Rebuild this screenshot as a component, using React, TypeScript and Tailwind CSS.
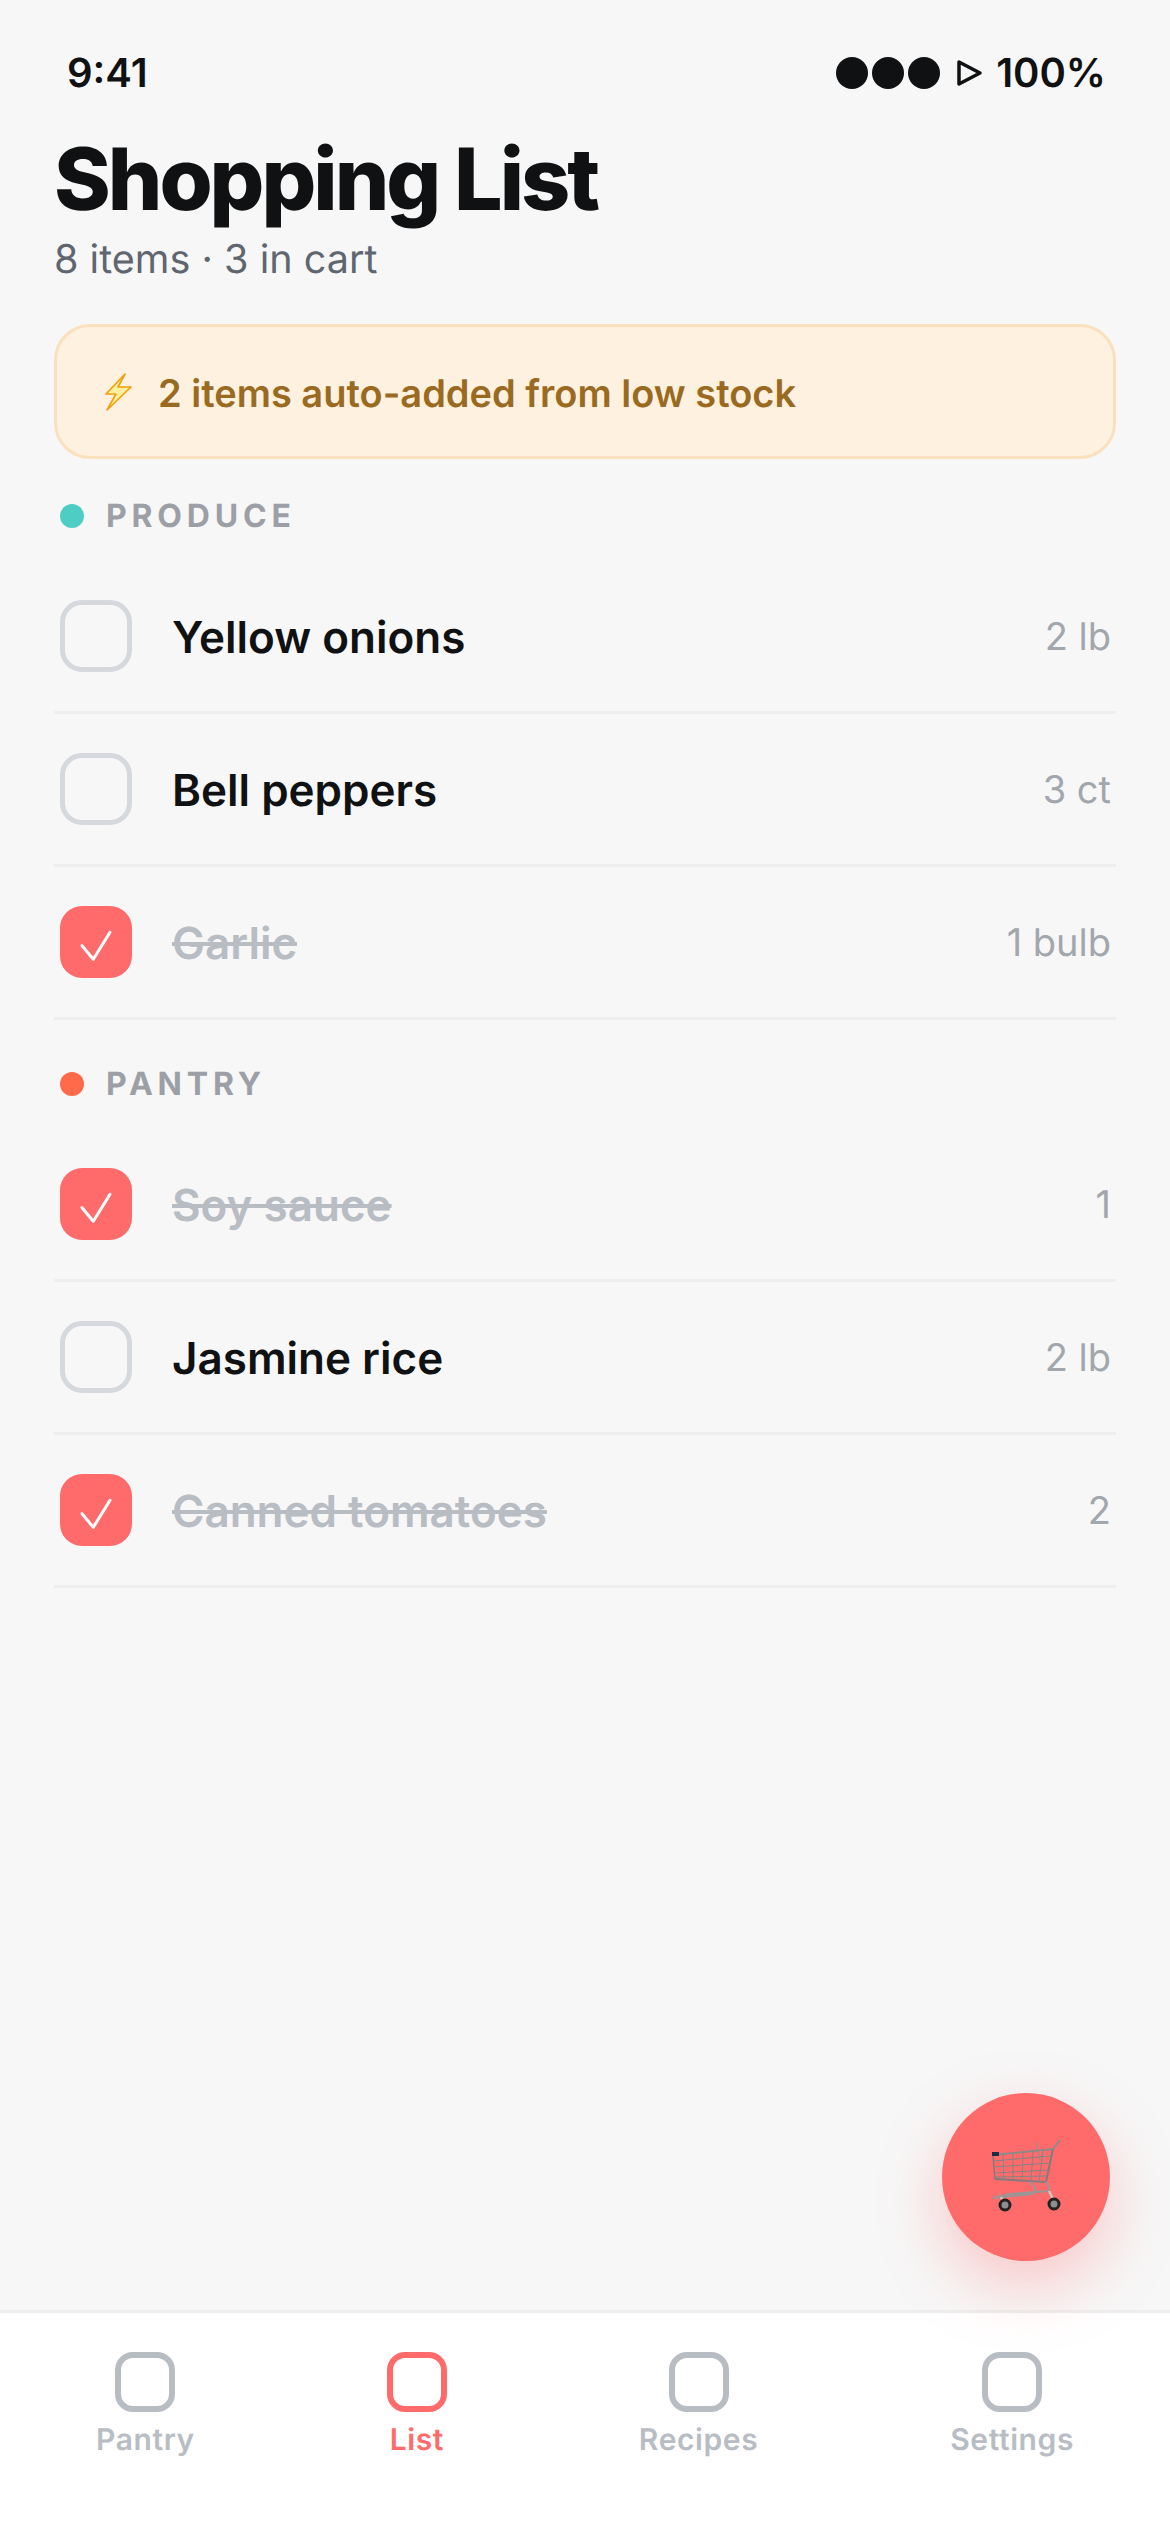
const items = {
  produce: [
    { name: "Yellow onions", qty: "2 lb", done: false },
    { name: "Bell peppers", qty: "3 ct", done: false },
    { name: "Garlic", qty: "1 bulb", done: true },
  ],
  pantry: [
    { name: "Soy sauce", qty: "1", done: true },
    { name: "Jasmine rice", qty: "2 lb", done: false },
    { name: "Canned tomatoes", qty: "2", done: true },
  ],
};

type Item = { name: string; qty: string; done: boolean };

const Row = ({ item }: { item: Item }) => (
  <div className="flex h-[153px] items-center border-b-[3px] border-[#EEEEEE] pl-[6px] pr-[5px]">
    {item.done ? (
      <div className="h-[72px] w-[72px] shrink-0 rounded-[22px] bg-[#FF6B6B]">
        <svg width="72" height="72" viewBox="0 0 72 72" fill="none">
          <path d="M22 39.7 L33.3 53.3 L50 26.3" stroke="#fff" strokeWidth="3" strokeLinecap="round" strokeLinejoin="round" />
        </svg>
      </div>
    ) : (
      <div className="h-[72px] w-[72px] shrink-0 rounded-[22px] border-[5px] border-[#D5D8DD]" />
    )}
    <span
      className={
        item.done
          ? "ml-10 flex-1 pt-[2px] text-[44px] font-semibold text-[#B8BDC4] line-through"
          : "ml-10 flex-1 pt-[2px] text-[44px] font-semibold text-[#0F1113]"
      }
    >
      {item.name}
    </span>
    <span className="pt-[2px] text-[38px] text-[#A2A6AD]">{item.qty}</span>
  </div>
);

const SectionLabel = ({ label, dot }: { label: string; dot: string }) => (
  <div className="flex items-center pl-[6px]">
    <span className={`h-6 w-6 rounded-full ${dot}`} />
    <span className="ml-[22px] text-[32px] leading-[40px] font-bold tracking-[0.15em] text-[#9CA0A6]">{label}</span>
  </div>
);

const Tab = ({ label, active }: { label: string; active?: boolean }) => (
  <div className="flex flex-col items-center gap-[9px]">
    <div
      className={
        active
          ? "h-[60px] w-[60px] rounded-[18px] border-[6px] border-[#FF6B6B]"
          : "h-[60px] w-[60px] rounded-[18px] border-[6px] border-[#B8BDC4]"
      }
    />
    <span
      className={
        active
          ? "text-[30px] leading-[38px] font-semibold tracking-[0.02em] text-[#FF6B6B]"
          : "text-[30px] leading-[38px] font-semibold tracking-[0.02em] text-[#B8BDC4]"
      }
    >
      {label}
    </span>
  </div>
);

const Bolt = () => (
  <svg width="28" height="38" viewBox="0 0 28 38" className="shrink-0">
    <path
      d="M21 1 L2 21 L12 21 L3 37 L27 14 L14 14 Z"
      fill="#FFEFA0"
      stroke="#F59E0B"
      strokeWidth="1.6"
      strokeLinejoin="round"
    />
  </svg>
);

const Cart = () => (
  <svg width="76" height="76" viewBox="0 0 76 76" fill="none">
    <path d="M45 3 L49 22" stroke="#9A8F8F" strokeWidth="1.2" />
    <path d="M2 16 L62 10 L69 1" stroke="#8E8A8A" strokeWidth="2" strokeLinejoin="round" />
    <path d="M4 40 L55 43 L62 10" stroke="#807C7C" strokeWidth="2" />
    <path d="M2 16 L4 40" stroke="#807C7C" strokeWidth="1.5" />
    <path
      d="M2.5 22 L60 17 M3 28 L59 24 M3.5 34 L57 31 M4 38 L56 37 M12 15 L13 41 M22 14 L22 41 M32 13 L31 42 M42 12 L40 42 M52 11 L48 43"
      stroke="#878383"
      strokeWidth="1"
    />
    <rect x="1" y="13" width="7" height="4" fill="#1F2A44" />
    <path d="M39 43 C46 48 45 52 41 55 L2 59 L18 55 L58 52 L58 47 L55 43" stroke="#9A9696" strokeWidth="2" />
    <path d="M58 52 L63 62 M10 58 L13 64" stroke="#C9C6C6" strokeWidth="2.5" />
    <circle cx="14" cy="66" r="5" fill="#8E8E8E" stroke="#222" strokeWidth="3" />
    <circle cx="63" cy="65" r="5" fill="#8E8E8E" stroke="#222" strokeWidth="3" />
  </svg>
);

export default function App() {
  return (
    <div className="relative flex h-[2532px] w-[1170px] flex-col overflow-hidden bg-[#F7F7F7] font-['Inter',sans-serif] [text-rendering:geometricPrecision]">
      <div className="flex-1 px-[54px]">
        <div className="flex items-center justify-between pt-[50px] pl-[13px] pr-[10px] text-[40px] leading-[46px] font-semibold text-[#0F1113]">
          <span>9:41</span>
          <span className="flex items-center">
            <span className="h-8 w-8 rounded-full bg-[#0F1113]" />
            <span className="ml-[4px] h-8 w-8 rounded-full bg-[#0F1113]" />
            <span className="ml-[4px] h-8 w-8 rounded-full bg-[#0F1113]" />
            <svg width="26" height="28" viewBox="0 0 26 28" fill="none" className="ml-[17px] mr-[13px]">
              <path d="M2 3 L23 14 L2 25 Z" stroke="#0F1113" strokeWidth="3.5" strokeLinejoin="round" />
            </svg>
            <span>100%</span>
          </span>
        </div>

        <h1 className="mt-[33px] text-[86px] leading-[100px] font-extrabold tracking-[-0.035em] text-[#0F1113]">
          Shopping List
        </h1>
        <p className="mt-[7px] text-[39.6px] leading-[46px] text-[#5F6670]">8 items · 3 in cart</p>

        <div className="mt-[42px] flex h-[135px] items-center rounded-[36px] border-[3px] border-[#FBE0BE] bg-[#FFF1E0] pl-[47px]">
          <Bolt />
          <span className="ml-[26px] pt-[5px] text-[38px] font-semibold text-[#9A6A20]">
            2 items auto-added from low stock
          </span>
        </div>

        <div className="mt-[37px]">
          <SectionLabel label="PRODUCE" dot="bg-[#4ECDC4]" />
          <div className="mt-[25px]">
            {items.produce.map((item) => (
              <Row key={item.name} item={item} />
            ))}
          </div>
        </div>

        <div className="mt-[44px]">
          <SectionLabel label="PANTRY" dot="bg-[#FF6B4A]" />
          <div className="mt-[25px]">
            {items.pantry.map((item) => (
              <Row key={item.name} item={item} />
            ))}
          </div>
        </div>
      </div>

      <div className="absolute left-[942px] top-[2093px] flex h-[168px] w-[168px] items-center justify-center rounded-full bg-[#FF6B6B] pl-[5px] shadow-[0_24px_64px_rgba(255,107,107,0.35)]">
        <Cart />
      </div>

      <div className="flex h-[222px] items-start justify-around border-t-[3px] border-[#EEEEEE] bg-white pt-[39px]">
        <Tab label="Pantry" />
        <Tab label="List" active />
        <Tab label="Recipes" />
        <Tab label="Settings" />
      </div>
    </div>
  );
}
